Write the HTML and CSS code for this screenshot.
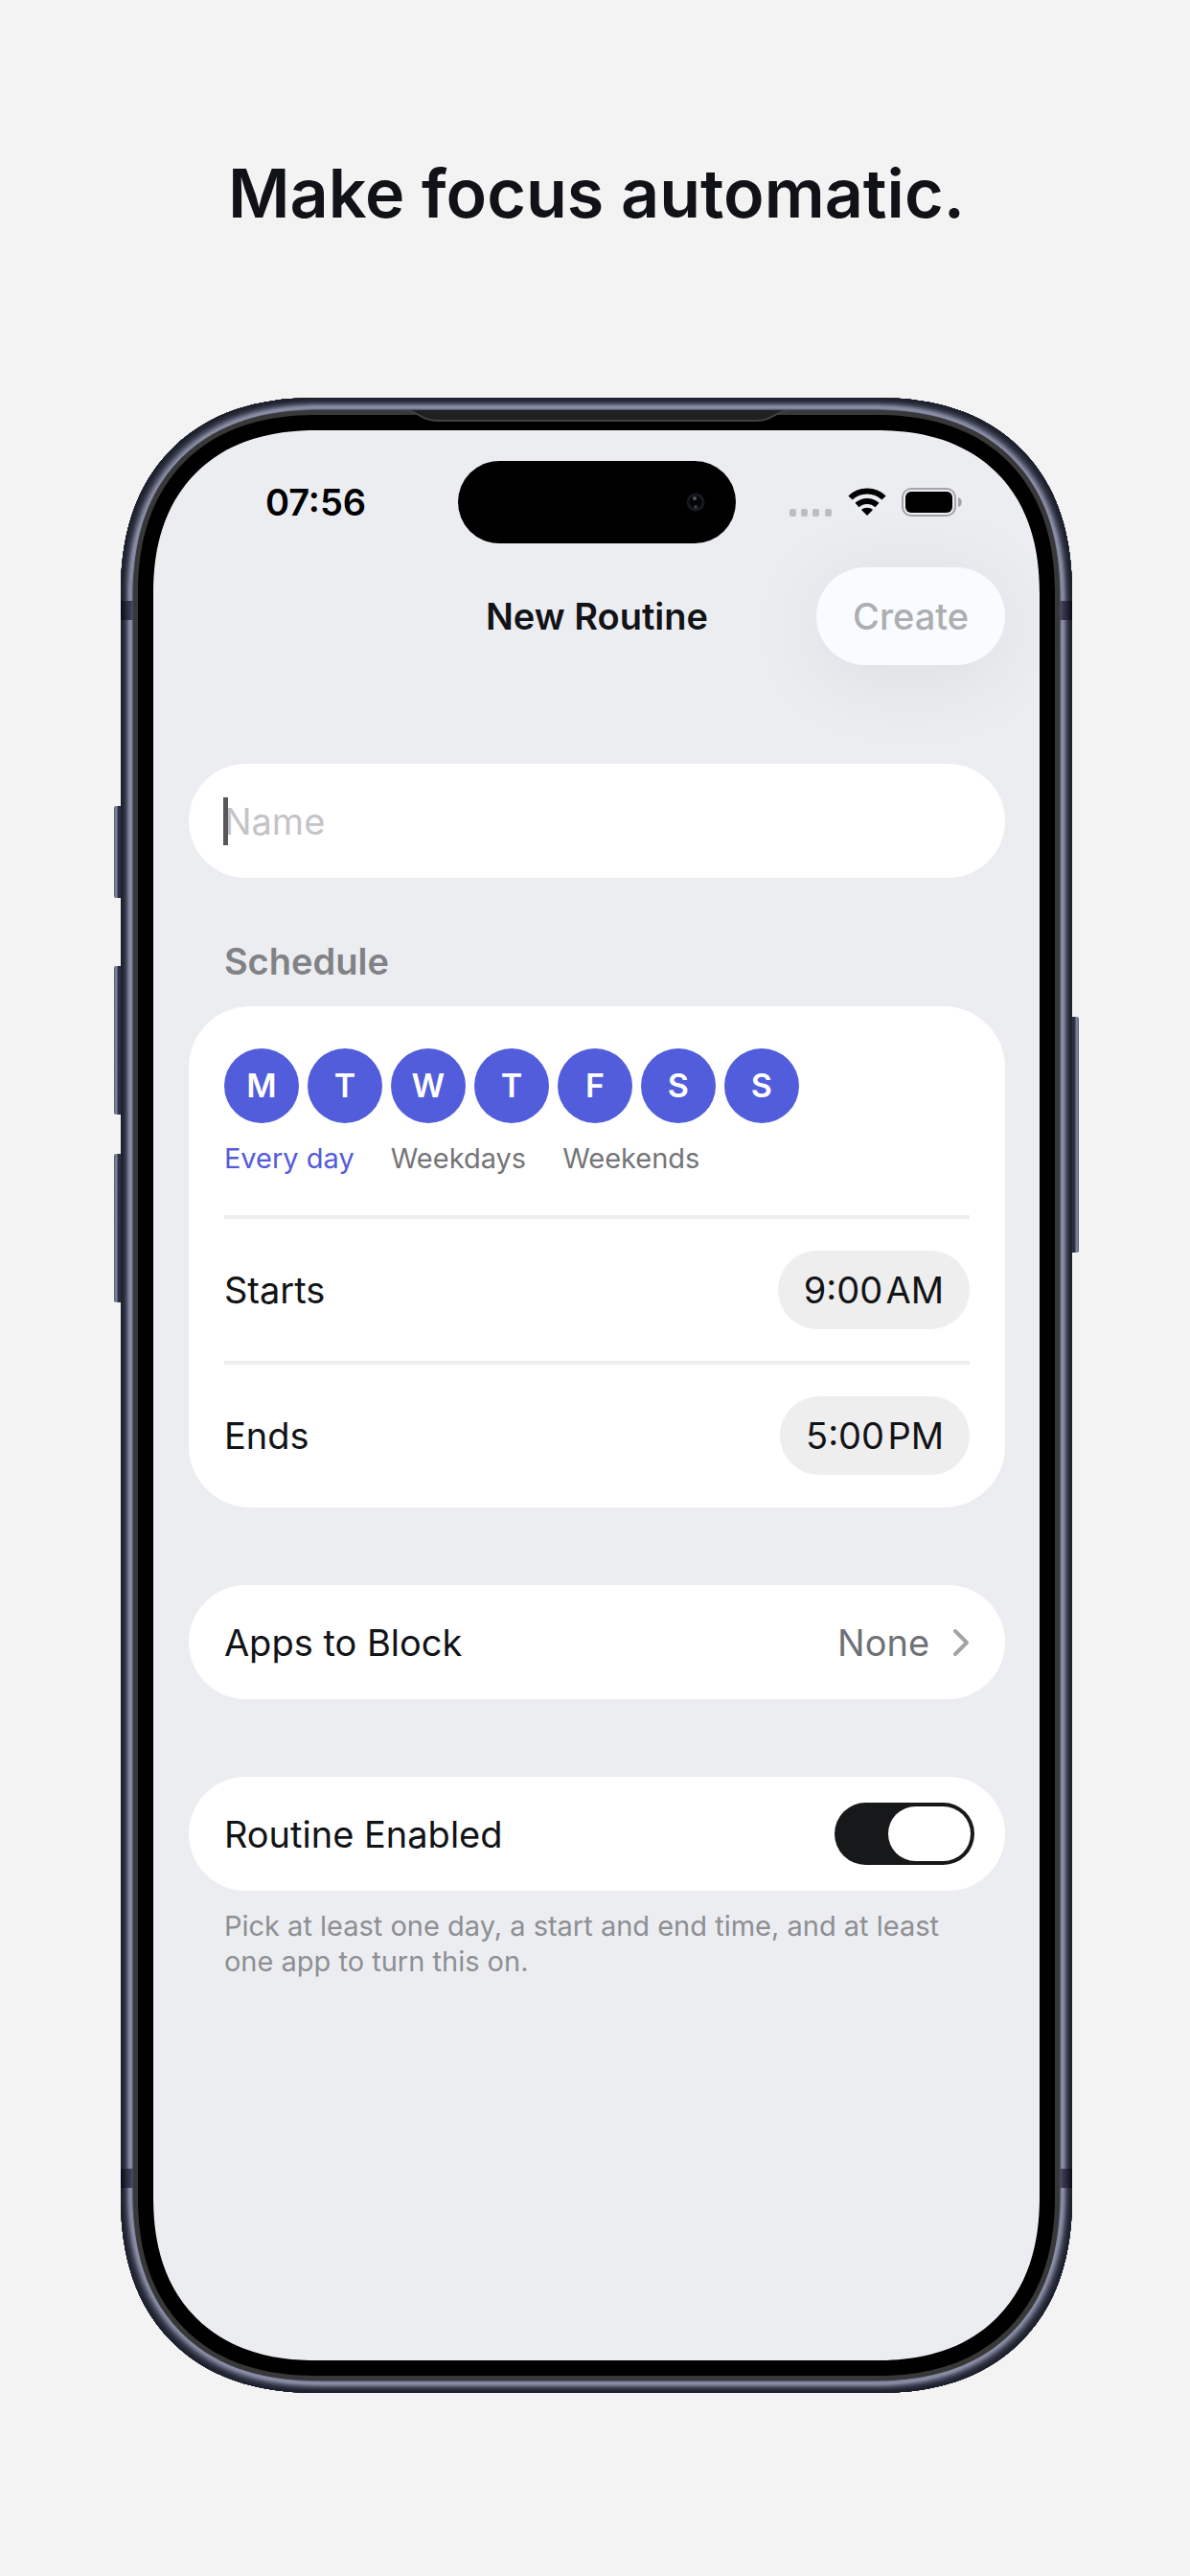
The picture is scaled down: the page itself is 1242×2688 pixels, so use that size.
FILE: index.html
```
<!DOCTYPE html>
<html lang="en">
<head>
  <meta charset="UTF-8">
  <meta name="viewport" content="width=device-width, initial-scale=1.0">
  <title>New Routine</title>
  <link rel="stylesheet" href="styles.css">
</head>
<body>

  <h1 class="headline">Make focus automatic.</h1>

  <div class="phone">
    <span class="side-button action"></span>
    <span class="side-button volume-up"></span>
    <span class="side-button volume-down"></span>
    <span class="side-button power"></span>
    <span class="antenna antenna-top"></span>
    <span class="antenna antenna-bottom"></span>

    <div class="bezel">
      <svg class="speaker" viewBox="0 0 400 14" aria-hidden="true">
        <path d="M0 0C12 0 16 11 34 11H366C384 11 388 0 400 0Z" fill="#202020"/>
        <path d="M0 0C12 0 16 11 34 11H366C384 11 388 0 400 0" fill="none" stroke="#404040" stroke-width="2"/>
      </svg>

      <div class="screen">
        <div class="status-bar">
          <span class="time">07:56</span>
          <div class="island">
            <svg class="camera" viewBox="0 0 20 20" aria-hidden="true">
              <circle cx="10" cy="10" r="8" fill="#050507" stroke="#15191f" stroke-width="3"/>
              <circle cx="9" cy="6" r="2" fill="#5a5a5a"/>
              <circle cx="10" cy="15" r="2" fill="#3c3c3c"/>
            </svg>
          </div>
          <div class="status-icons">
            <svg class="signal" viewBox="0 0 46 30" aria-hidden="true">
              <g fill="#bcbdc1">
                <rect x="1" y="22" width="7" height="8" rx="2"/>
                <rect x="13" y="22" width="7" height="8" rx="2"/>
                <rect x="25" y="22" width="7" height="8" rx="2"/>
                <rect x="38" y="22" width="7" height="8" rx="2"/>
              </g>
            </svg>
            <svg class="wifi" viewBox="0 0 40 30" aria-hidden="true">
              <g fill="none" stroke="#000" stroke-width="6">
                <path d="M2.5 10.500C12 1 28 1 37.5 10.500"/>
                <path d="M9.5 18C15.500 12.500 24.500 12.500 30.500 18"/>
              </g>
              <path d="M20 29L14 23C17 20 23 20 26 23Z"/>
            </svg>
            <svg class="battery" viewBox="0 0 64 30" aria-hidden="true">
              <rect x="1" y="1" width="55" height="28" rx="9" fill="none" stroke="#a3a4a7" stroke-width="2"/>
              <rect x="4" y="4" width="49" height="22" rx="6"/>
              <path d="M59 10C64 11 64 19 59 20Z" fill="#a3a4a7"/>
            </svg>
          </div>
        </div>

        <header class="nav">
          <h2 class="nav-title">New Routine</h2>
          <button class="create" type="button" disabled>Create</button>
        </header>

        <form class="form">
          <div class="card row name-row">
            <span class="caret"></span>
            <input class="name-input" type="text" placeholder="Name" aria-label="Name">
          </div>

          <h3 class="section-title">Schedule</h3>
          <section class="card schedule">
            <div class="days">
              <button class="day" type="button" aria-label="Monday" aria-pressed="true">M</button>
              <button class="day" type="button" aria-label="Tuesday" aria-pressed="true">T</button>
              <button class="day" type="button" aria-label="Wednesday" aria-pressed="true">W</button>
              <button class="day" type="button" aria-label="Thursday" aria-pressed="true">T</button>
              <button class="day" type="button" aria-label="Friday" aria-pressed="true">F</button>
              <button class="day" type="button" aria-label="Saturday" aria-pressed="true">S</button>
              <button class="day" type="button" aria-label="Sunday" aria-pressed="true">S</button>
            </div>
            <div class="presets">
              <button class="preset selected" type="button">Every day</button>
              <button class="preset" type="button">Weekdays</button>
              <button class="preset" type="button">Weekends</button>
            </div>
            <div class="time-row">
              <label for="starts">Starts</label>
              <button class="time-pill" id="starts" type="button">9:00&#8202;AM</button>
            </div>
            <div class="time-row">
              <label for="ends">Ends</label>
              <button class="time-pill" id="ends" type="button">5:00&#8202;PM</button>
            </div>
          </section>

          <a class="card row apps" href="#apps">
            <span>Apps to Block</span>
            <span class="apps-value">
              None
              <svg class="chevron" viewBox="0 0 18 30" aria-hidden="true">
                <path d="M3 3L15 15L3 27" fill="none" stroke="#a3a4a8" stroke-width="4" stroke-linecap="round" stroke-linejoin="round"/>
              </svg>
            </span>
          </a>

          <div class="card row">
            <label for="enabled">Routine Enabled</label>
            <input class="switch" id="enabled" type="checkbox" role="switch" checked>
          </div>
          <p class="hint">Pick at least one day, a start and end time, and at least one app to turn this on.</p>
        </form>
      </div>
    </div>
  </div>

</body>
</html>
```

FILE: styles.css
```
* {
  box-sizing: border-box;
}

body {
  margin: 0;
  padding: 160px 0 194px 3px;
  background-color: #f3f3f3;
  color: #121316;
  font-family: Inter, "Liberation Sans", sans-serif;
  font-size: 38px;
  line-height: 48px;
}

h1, h2, h3, p {
  margin: 0;
}

button, input {
  padding: 0;
  border: none;
  background: none;
  color: inherit;
  font: inherit;
}

.headline {
  margin-bottom: 171px;
  font-size: 70px;
  font-weight: 600;
  line-height: 84px;
  text-align: center;
  color: #111217;
}

/* Phone frame */
.phone {
  position: relative;
  width: calc(80% + 2px);
  margin: 0 auto;
  padding: 13px;
  border-radius: 182px;
  background-color: #595c70;
  box-shadow:
    inset 0 0 0 1px #1d202c,
    inset 0 0 0 2px #20232f,
    inset 0 0 0 3px #242734,
    inset 0 0 0 4px #2b2e3c,
    inset 0 0 0 5px #353848,
    inset 0 0 0 6px #424558,
    inset 0 0 0 7px #545769,
    inset 0 0 0 8px #686b80,
    inset 0 0 0 9px #7b7e95,
    inset 0 0 0 11px #898ca5,
    inset 0 0 0 12px #7c7f9b,
    inset 0 0 0 13px #555972;
}

.bezel {
  position: relative;
  padding: 16px;
  border: 5px solid #383838;
  border-radius: 169px;
  background-color: #000;
}

.speaker {
  position: absolute;
  top: -5px;
  left: 50%;
  width: 400px;
  height: 14px;
  transform: translateX(-50%);
}

.side-button {
  position: absolute;
  left: -7px;
  width: 7px;
  border-radius: 2px 0 0 2px;
  background: linear-gradient(90deg, #50546a, #8b8fa6 30%, #23263a 70%, #343747);
}

.action {
  top: 426px;
  height: 96px;
}

.volume-up {
  top: 593px;
  height: 155px;
}

.volume-down {
  top: 789px;
  height: 155px;
}

.power {
  top: 646px;
  right: -7px;
  left: auto;
  height: 246px;
  transform: scaleX(-1);
}

.antenna {
  position: absolute;
  right: 0;
  left: 0;
  height: 20px;
  background: linear-gradient(90deg, #080a18, #4a4c66 13px, transparent 13px, transparent calc(100% - 13px), #4a4c66 calc(100% - 13px), #080a18);
}

.antenna-top {
  top: 212px;
}

.antenna-bottom {
  bottom: 214px;
}

.screen {
  aspect-ratio: 924 / 2011;
  padding: 32px 36px 32px 37px;
  border-radius: 148px;
  background-color: #ecedf1;
}

/* Smoother corners where the browser can draw them */
@supports (corner-shape: superellipse(1.2)) {
  .phone,
  .bezel,
  .screen {
    corner-shape: superellipse(1.2);
  }

  .phone {
    border-radius: 205px;
  }

  .bezel {
    border-radius: 192px;
  }

  .screen {
    border-radius: 171px;
  }
}

/* Status bar */
.status-bar {
  display: grid;
  grid-template-columns: 1fr 290px 1fr;
  align-items: center;
  height: 86px;
}

.time {
  padding-left: 80px;
  font-weight: 600;
  color: #000;
}

.island {
  display: flex;
  align-items: center;
  justify-content: flex-end;
  height: 86px;
  padding-right: 32px;
  border-radius: 43px;
  background-color: #000;
}

.camera {
  width: 20px;
  height: 20px;
}

.status-icons {
  display: flex;
  align-items: center;
  justify-content: flex-end;
  gap: 16px;
  padding-right: 44px;
}

.signal {
  width: 46px;
  height: 30px;
}

.wifi {
  width: 40px;
  height: 30px;
}

.battery {
  width: 64px;
  height: 30px;
}

/* Navigation */
.nav {
  display: grid;
  grid-template-columns: 1fr auto 1fr;
  align-items: center;
  margin-top: 25px;
}

.nav-title {
  grid-column: 2;
  font-size: 38px;
  font-weight: 600;
}

.create {
  justify-self: end;
  height: 102px;
  padding: 0 38px;
  border-radius: 51px;
  background-color: #f8fbff;
  box-shadow: 0 12px 90px rgba(0, 0, 0, 0.07);
  font-weight: 500;
  color: #acaeb0;
}

/* Form */
.form {
  margin-top: 103px;
}

.card {
  position: relative;
  border-radius: 64px;
  background-color: #fff;
}

.row {
  display: flex;
  align-items: center;
  justify-content: space-between;
  height: 119px;
  padding: 0 37px;
}

.caret {
  position: absolute;
  left: 36px;
  width: 5px;
  height: 50px;
  background-color: #58585b;
}

.name-input {
  width: 100%;
  outline: none;
}

.name-input::placeholder {
  color: #c4c4c7;
  opacity: 1;
}

.section-title {
  margin: 63px 37px 23px;
  font-size: 38px;
  font-weight: 600;
  color: #808285;
}

.schedule {
  padding: 44px 37px 1px;
}

.days {
  display: flex;
  gap: 9px;
}

.day {
  width: 78px;
  height: 78px;
  border-radius: 50%;
  background-color: #515ddb;
  font-size: 34px;
  font-weight: 600;
  color: #fff;
}

.presets {
  display: flex;
  gap: 38px;
  padding: 18px 0 40px;
}

.preset {
  font-size: 29px;
  line-height: 38px;
  color: #747578;
}

.preset.selected {
  color: #555bd8;
}

.time-row {
  display: flex;
  align-items: center;
  justify-content: space-between;
  height: 152px;
  border-top: 4px solid #eeeeef;
}

.time-pill {
  height: 82px;
  padding: 0 27px;
  border-radius: 41px;
  background-color: #eee;
}

.apps {
  margin: 81px 0;
  color: inherit;
  text-decoration: none;
}

.apps-value {
  display: flex;
  align-items: center;
  gap: 24px;
  color: #6e7175;
}

.chevron {
  width: 18px;
  height: 30px;
}

/* Toggle */
.switch {
  display: flex;
  align-items: center;
  justify-content: flex-end;
  width: 146px;
  height: 65px;
  margin: 0 -5px 0 0;
  padding: 4px;
  border-radius: 33px;
  background-color: #17181a;
  appearance: none;
}

.switch::before {
  content: "";
  width: 86px;
  height: 57px;
  border-radius: 29px;
  background-color: #fff;
}

.switch:not(:checked) {
  justify-content: flex-start;
  background-color: #c9cacd;
}

.hint {
  margin: 18px 37px 0;
  font-size: 29px;
  line-height: 37px;
  color: #8d8f93;
}
```
